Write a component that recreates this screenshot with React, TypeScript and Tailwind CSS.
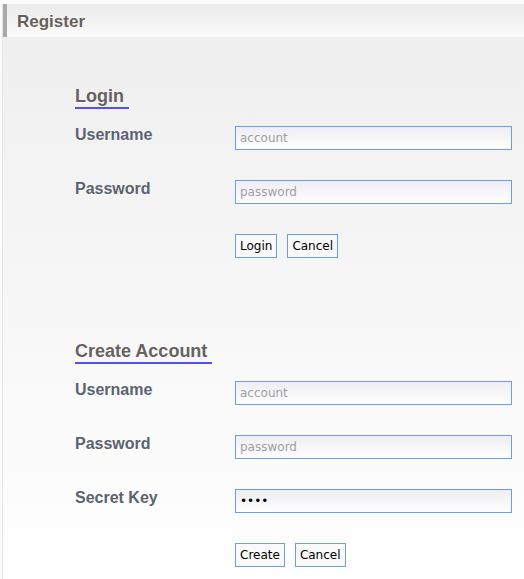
import React from "react";

const headFont = { fontFamily: '"Liberation Sans", Helvetica, Arial, sans-serif' };

function Field({ label, placeholder, type = "text", value }: { label: string; placeholder?: string; type?: string; value?: string }) {
  return (
    <>
      <div
        className="h-[24px] text-[16px] leading-[18px] font-bold text-[#5b6271] [text-shadow:0_1px_0_#ffffff] [font-family:'Liberation_Sans',Helvetica,Arial,sans-serif]"
      >
        {label}
      </div>
      <input
        type={type}
        placeholder={placeholder}
        defaultValue={value}
        className="block h-[24px] w-full border border-[#6c9bf7] bg-gradient-to-b from-[#eeeef3] to-[#ffffff] px-[4px] text-[12px] text-black outline-none placeholder:text-[#9f9f9f] [font-family:'DejaVu_Sans',sans-serif]"
      />
    </>
  );
}

function Buttons({ primary }: { primary: string }) {
  return (
    <>
      <div />
      <div className="flex h-[24px] gap-[10px]">
        <button className="h-[24px] border border-[#6c9bf7] bg-[#fafafa] px-[4px] text-[12px] leading-[22px] text-black [font-family:'DejaVu_Sans',sans-serif]">
          {primary}
        </button>
        <button className="h-[24px] border border-[#6c9bf7] bg-[#fafafa] px-[4px] text-[12px] leading-[22px] text-black [font-family:'DejaVu_Sans',sans-serif]">
          Cancel
        </button>
      </div>
    </>
  );
}

function Heading({ children, className }: { children: React.ReactNode; className: string }) {
  return (
    <div className={"flex " + className}>
      <span
        className="block border-b-2 border-[#5252ef] pr-[5px] text-[18px] leading-[22px] font-bold text-[#68615f] [text-shadow:0_1px_0_#ffffff]"
        style={headFont}
      >
        {children}
      </span>
    </div>
  );
}

export default function App() {
  return (
    <div className="w-[524px] h-[579px] overflow-hidden bg-[#fbfbfb] pt-[4px] pl-[2px]">
      <div className="h-[575px] border-l border-[#e6e6e6] flex flex-col">
        <div
          className="h-[33px] shrink-0 border-l-4 border-[#a9a9a9] bg-gradient-to-b from-[#eaeaea] to-[#fcfcfc] pl-[10px] pt-[8px] text-[17px] leading-[20px] font-bold text-[#675f5b] [text-shadow:0_1px_0_#ffffff]"
          style={headFont}
        >
          Register
        </div>
        <div className="flex-1 bg-gradient-to-b from-[#efefef] to-[#ffffff] pl-[72px] pr-[12px]">
          <Heading className="mt-[48px]">Login</Heading>
          <div className="mt-[17px] grid grid-cols-[160px_1fr] gap-y-[30px]">
            <Field label="Username" placeholder="account" />
            <Field label="Password" placeholder="password" type="password" />
            <Buttons primary="Login" />
          </div>
          <Heading className="mt-[82px]">Create Account</Heading>
          <div className="mt-[17px] grid grid-cols-[160px_1fr] gap-y-[30px]">
            <Field label="Username" placeholder="account" />
            <Field label="Password" placeholder="password" type="password" />
            <Field label="Secret Key" type="password" value="abcd" />
            <Buttons primary="Create" />
          </div>
        </div>
      </div>
    </div>
  );
}
